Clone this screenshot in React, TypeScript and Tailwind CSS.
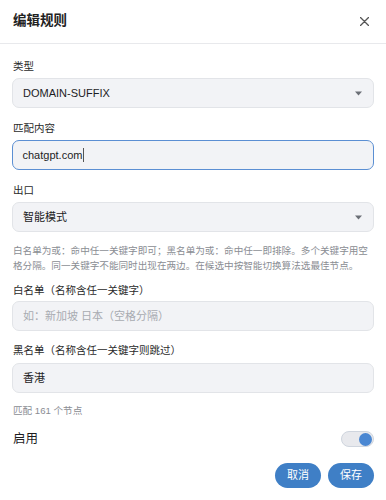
import React from "react";

const font = { fontFamily: '"Liberation Sans", "Noto Sans CJK SC", sans-serif' };

function Caret() {
  return (
    <svg width="7" height="5" viewBox="0 0 7 5" className="shrink-0">
      <path d="M0 0.5 H7 L3.5 4.5 Z" fill="#6b6f76" />
    </svg>
  );
}

function Label({ children }: { children: React.ReactNode }) {
  return <div className="text-[10.5px] leading-[16px] text-[#2a2a2a]">{children}</div>;
}

function Box({ children, focused = false, select = false }: { children: React.ReactNode; focused?: boolean; select?: boolean }) {
  return (
    <div
      className={
        "h-[30px] rounded-[7px] bg-[#f2f3f6] flex items-center justify-between pl-[10px] pr-[11px] text-[11px] " +
        (focused ? "border-[1.5px] border-[#5b8fd3]" : "border border-[#e2e4e8]")
      }
    >
      {children}
      {select && <Caret />}
    </div>
  );
}

export default function App() {
  return (
    <div className="w-[386px] h-[500px] bg-white text-[#1d1d1f] overflow-hidden" style={font}>
      <div className="h-[44px] flex items-center justify-between pl-[13px] pr-[17px] border-b border-[#e8e9ec]">
        <div className="text-[13.5px] font-semibold text-[#222]">编辑规则</div>
        <svg width="9" height="9" viewBox="0 0 9 9">
          <path d="M0.5 0.5 L8.5 8.5 M8.5 0.5 L0.5 8.5" stroke="#555" strokeWidth="1.3" strokeLinecap="round" />
        </svg>
      </div>
      <div className="px-3">
        <div className="pl-px mt-[14px]">
          <Label>类型</Label>
        </div>
        <div className="mt-[4px]">
          <Box select>
            <span className="text-[#1d1d1f]">DOMAIN-SUFFIX</span>
          </Box>
        </div>
        <div className="pl-px mt-[12px]">
          <Label>匹配内容</Label>
        </div>
        <div className="mt-[4px]">
          <Box focused>
            <span className="flex items-center text-[#1d1d1f] -ml-[0.5px]">
              chatgpt.com<span className="inline-block w-px h-[14px] bg-[#555] ml-px" />
            </span>
          </Box>
        </div>
        <div className="pl-px mt-[12px]">
          <Label>出口</Label>
        </div>
        <div className="mt-[4px]">
          <Box select>
            <span>智能模式</span>
          </Box>
        </div>
        <div className="pl-px mt-[11px] text-[9.6px] leading-[15px] text-[#8a8d93]">
          白名单为或：命中任一关键字即可；黑名单为或：命中任一即排除。多个关键字用空格分隔。同一关键字不能同时出现在两边。在候选中按智能切换算法选最佳节点。
        </div>
        <div className="pl-px mt-[9px]">
          <Label>白名单（名称含任一关键字）</Label>
        </div>
        <div className="mt-[3px]">
          <Box>
            <span className="text-[#a8abb1]">如：新加坡 日本（空格分隔）</span>
          </Box>
        </div>
        <div className="pl-px mt-[11px]">
          <Label>黑名单（名称含任一关键字则跳过）</Label>
        </div>
        <div className="mt-[5px]">
          <Box>
            <span>香港</span>
          </Box>
        </div>
        <div className="pl-px mt-[11px] text-[9.6px] leading-[14px] text-[#8a8d93]">匹配 161 个节点</div>
        <div className="mt-[12px] flex items-center justify-between pl-px">
          <div className="text-[12.5px] leading-[18px] text-[#1d1d1f]">启用</div>
          <div className="w-[33px] h-[16px] rounded-full bg-[#e8e9ed] border border-[#cfd5de] flex items-center justify-end pr-[1px]">
            <div className="w-[13px] h-[13px] rounded-full bg-[#4a87d2]" />
          </div>
        </div>
        <div className="mt-[15px] flex justify-end gap-[7px]">
          <div className="w-[46px] h-[25px] rounded-full bg-[#3f7fc6] text-white text-[11px] flex items-center justify-center">取消</div>
          <div className="w-[46px] h-[25px] rounded-full bg-[#3f7fc6] text-white text-[11px] flex items-center justify-center">保存</div>
        </div>
      </div>
    </div>
  );
}
